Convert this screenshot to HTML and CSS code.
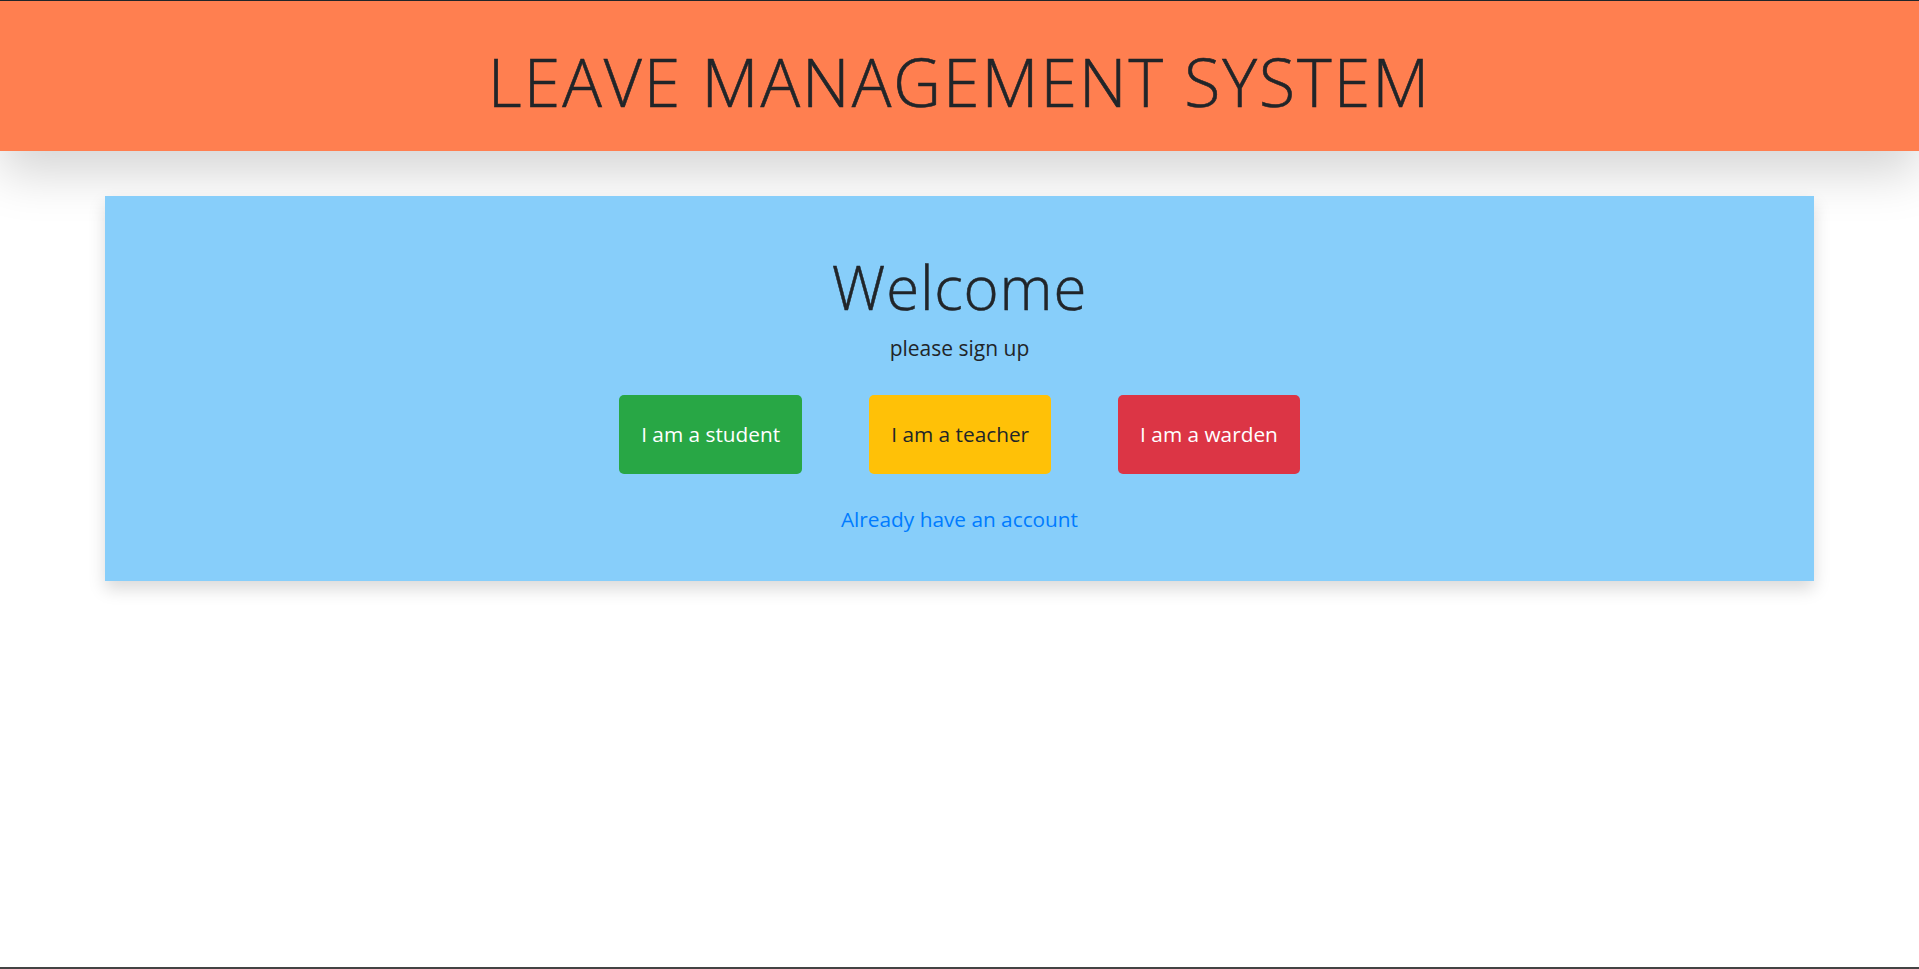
FILE: index.html
```html
<!DOCTYPE html>
<html lang="en">
<head>
<meta charset="utf-8">
<title>Leave Management System</title>
<link rel="stylesheet" href="styles.css">
</head>
<body>
<header class="site-header">
  <h1 class="site-title">LEAVE MANAGEMENT SYSTEM</h1>
</header>
<main class="welcome-card">
  <h2 class="welcome-title">Welcome</h2>
  <p class="welcome-sub">please sign up</p>
  <div class="role-buttons">
    <a class="btn btn-student" href="#">I am a student</a>
    <a class="btn btn-teacher" href="#">I am a teacher</a>
    <a class="btn btn-warden" href="#">I am a warden</a>
  </div>
  <a class="login-link" href="#">Already have an account</a>
</main>
<div class="frame-line"></div>
</body>
</html>
```
FILE: styles.css
```css
* { box-sizing: border-box; }
html, body { margin: 0; padding: 0; }
body {
  background: #ffffff;
  font-family: "Open Sans", "Noto Sans", sans-serif;
  color: #212529;
  min-height: 969px;
}
.site-header {
  background: #ff7f50;
  border-top: 1px solid #212529;
  height: 151px;
  padding-top: 47px;
  box-shadow: 0 22px 50px rgba(0, 0, 0, 0.17);
  text-align: center;
}
.site-title {
  margin: 0;
  font-size: 66px;
  line-height: 66px;
  font-weight: 300;
  letter-spacing: 2px;
  -webkit-text-stroke: 0.6px #212529;
  color: #212529;
}
.welcome-card {
  display: flex;
  flex-direction: column;
  align-items: center;
  margin: 45px 105px 0;
  padding: 55px 0 45px;
  background: #87cefa;
  box-shadow: 0 8px 16px rgba(0, 0, 0, 0.15);
  height: 385px;
}
.welcome-title {
  margin: 0;
  font-size: 60px;
  line-height: 72px;
  font-weight: 300;
  letter-spacing: 0.8px;
  -webkit-text-stroke: 0.5px #212529;
}
.welcome-sub {
  margin: 10px 0 0;
  font-size: 21px;
  line-height: 30px;
}
.role-buttons {
  display: flex;
  gap: 67px;
  margin-top: 32px;
}
.btn {
  display: block;
  padding: 24px 22px;
  font-size: 20.8px;
  line-height: 31px;
  border-radius: 5px;
  text-decoration: none;
  color: #ffffff;
}
.btn-student { background: #28a745; }
.btn-teacher { background: #ffc107; color: #212529; }
.btn-warden { background: #dc3545; }
.login-link {
  margin-top: 30px;
  font-size: 20.8px;
  line-height: 30px;
  color: #007bff;
  text-decoration: none;
}
.frame-line {
  position: fixed;
  left: 0;
  right: 0;
  bottom: 0;
  height: 2px;
  background: #444444;
}
```
